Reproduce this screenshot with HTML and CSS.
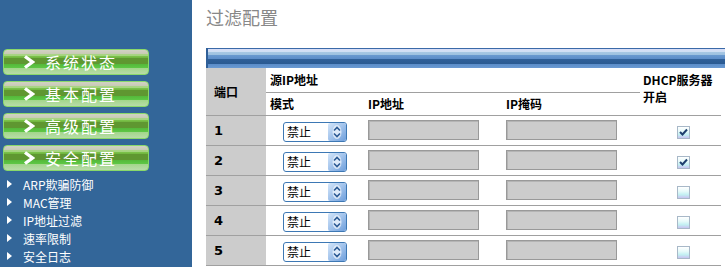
FILE: index.html
```html
<!DOCTYPE html>
<html lang="zh-CN">
<head>
<meta charset="utf-8">
<title>过滤配置</title>
<link rel="stylesheet" href="styles.css">
</head>
<body>
<aside class="side">
  <nav class="menu">
    <a class="btn"><svg class="chev" width="12" height="14" viewBox="0 0 12 14"><polyline points="2,1.5 9.5,7 2,12.5" fill="none" stroke="#fff" stroke-width="3.4" stroke-linejoin="miter"/></svg><span>系统状态</span></a>
    <a class="btn"><svg class="chev" width="12" height="14" viewBox="0 0 12 14"><polyline points="2,1.5 9.5,7 2,12.5" fill="none" stroke="#fff" stroke-width="3.4" stroke-linejoin="miter"/></svg><span>基本配置</span></a>
    <a class="btn"><svg class="chev" width="12" height="14" viewBox="0 0 12 14"><polyline points="2,1.5 9.5,7 2,12.5" fill="none" stroke="#fff" stroke-width="3.4" stroke-linejoin="miter"/></svg><span>高级配置</span></a>
    <a class="btn"><svg class="chev" width="12" height="14" viewBox="0 0 12 14"><polyline points="2,1.5 9.5,7 2,12.5" fill="none" stroke="#fff" stroke-width="3.4" stroke-linejoin="miter"/></svg><span>安全配置</span></a>
  </nav>
  <ul class="links">
    <li><span class="tri"></span>ARP欺骗防御</li>
    <li><span class="tri"></span>MAC管理</li>
    <li><span class="tri"></span>IP地址过滤</li>
    <li><span class="tri"></span>速率限制</li>
    <li><span class="tri"></span>安全日志</li>
  </ul>
</aside>
<main class="content">
  <h1 class="title">过滤配置</h1>
  <div class="bar"></div>
  <table class="grid">
    <colgroup>
      <col class="c-port"><col class="c-mode"><col class="c-ip"><col class="c-mask"><col class="c-dhcp">
    </colgroup>
    <thead>
      <tr class="h1">
        <th class="port" rowspan="2">端口</th>
        <th class="src" colspan="3">源IP地址</th>
        <th class="dhcp" rowspan="2">DHCP服务器<br>开启</th>
      </tr>
      <tr class="h2">
        <th>模式</th>
        <th>IP地址</th>
        <th>IP掩码</th>
      </tr>
    </thead>
    <tbody>
      <tr>
        <td class="port">1</td>
        <td class="mode"><span class="sel"><span class="sel-text">禁止</span><svg class="sel-btn" width="18" height="18" viewBox="0 0 18 18"><defs><linearGradient id="g1" x1="0" y1="0" x2="1" y2="1"><stop offset="0" stop-color="#d4e6fa"/><stop offset="1" stop-color="#6f9fdc"/></linearGradient></defs><rect x="0" y="0" width="18" height="18" rx="2" fill="url(#g1)"/><ellipse cx="9" cy="9" rx="4.5" ry="7" fill="#e6f0fc" opacity="0.85"/><polyline points="6,7.5 9,4.5 12,7.5" fill="none" stroke="#2c5a94" stroke-width="1.6"/><polyline points="6,10.5 9,13.5 12,10.5" fill="none" stroke="#2c5a94" stroke-width="1.6"/></svg></span></td>
        <td><span class="inp"></span></td>
        <td><span class="inp"></span></td>
        <td class="chk-cell"><span class="chk on"><svg width="9" height="8" viewBox="0 0 9 8"><polyline points="1,4 3.5,6.5 8,1.5" fill="none" stroke="#1f3f6e" stroke-width="2"/></svg></span></td>
      </tr>
      <tr>
        <td class="port">2</td>
        <td class="mode"><span class="sel"><span class="sel-text">禁止</span><svg class="sel-btn" width="18" height="18" viewBox="0 0 18 18"><rect x="0" y="0" width="18" height="18" rx="2" fill="url(#g1)"/><ellipse cx="9" cy="9" rx="4.5" ry="7" fill="#e6f0fc" opacity="0.85"/><polyline points="6,7.5 9,4.5 12,7.5" fill="none" stroke="#2c5a94" stroke-width="1.6"/><polyline points="6,10.5 9,13.5 12,10.5" fill="none" stroke="#2c5a94" stroke-width="1.6"/></svg></span></td>
        <td><span class="inp"></span></td>
        <td><span class="inp"></span></td>
        <td class="chk-cell"><span class="chk on"><svg width="9" height="8" viewBox="0 0 9 8"><polyline points="1,4 3.5,6.5 8,1.5" fill="none" stroke="#1f3f6e" stroke-width="2"/></svg></span></td>
      </tr>
      <tr>
        <td class="port">3</td>
        <td class="mode"><span class="sel"><span class="sel-text">禁止</span><svg class="sel-btn" width="18" height="18" viewBox="0 0 18 18"><rect x="0" y="0" width="18" height="18" rx="2" fill="url(#g1)"/><ellipse cx="9" cy="9" rx="4.5" ry="7" fill="#e6f0fc" opacity="0.85"/><polyline points="6,7.5 9,4.5 12,7.5" fill="none" stroke="#2c5a94" stroke-width="1.6"/><polyline points="6,10.5 9,13.5 12,10.5" fill="none" stroke="#2c5a94" stroke-width="1.6"/></svg></span></td>
        <td><span class="inp"></span></td>
        <td><span class="inp"></span></td>
        <td class="chk-cell"><span class="chk"></span></td>
      </tr>
      <tr>
        <td class="port">4</td>
        <td class="mode"><span class="sel"><span class="sel-text">禁止</span><svg class="sel-btn" width="18" height="18" viewBox="0 0 18 18"><rect x="0" y="0" width="18" height="18" rx="2" fill="url(#g1)"/><ellipse cx="9" cy="9" rx="4.5" ry="7" fill="#e6f0fc" opacity="0.85"/><polyline points="6,7.5 9,4.5 12,7.5" fill="none" stroke="#2c5a94" stroke-width="1.6"/><polyline points="6,10.5 9,13.5 12,10.5" fill="none" stroke="#2c5a94" stroke-width="1.6"/></svg></span></td>
        <td><span class="inp"></span></td>
        <td><span class="inp"></span></td>
        <td class="chk-cell"><span class="chk"></span></td>
      </tr>
      <tr>
        <td class="port">5</td>
        <td class="mode"><span class="sel"><span class="sel-text">禁止</span><svg class="sel-btn" width="18" height="18" viewBox="0 0 18 18"><rect x="0" y="0" width="18" height="18" rx="2" fill="url(#g1)"/><ellipse cx="9" cy="9" rx="4.5" ry="7" fill="#e6f0fc" opacity="0.85"/><polyline points="6,7.5 9,4.5 12,7.5" fill="none" stroke="#2c5a94" stroke-width="1.6"/><polyline points="6,10.5 9,13.5 12,10.5" fill="none" stroke="#2c5a94" stroke-width="1.6"/></svg></span></td>
        <td><span class="inp"></span></td>
        <td><span class="inp"></span></td>
        <td class="chk-cell"><span class="chk"></span></td>
      </tr>
    </tbody>
  </table>
</main>
</body>
</html>
```

FILE: styles.css
```css
html, body {
  margin: 0;
  padding: 0;
  height: 100%;
}
body {
  display: flex;
  font-family: "Noto Sans CJK SC", "DejaVu Sans", sans-serif;
  font-size: 12px;
  color: #000;
  background: #fff;
  overflow: hidden;
}
.side {
  width: 192px;
  flex: 0 0 192px;
  background: #336699;
  padding-top: 49px;
  box-sizing: border-box;
}
.menu {
  display: flex;
  flex-direction: column;
  gap: 6px;
  padding-left: 3px;
}
.btn {
  display: flex;
  align-items: center;
  width: 146px;
  height: 26px;
  box-sizing: border-box;
  border: 1px solid #8ad86a;
  border-radius: 4px;
  background: linear-gradient(to bottom,
    #d2d2c4 0px, #c8cab4 4px,
    #aad386 4px, #a4d47e 6px,
    #7dc64c 6px, #6fb23e 8px,
    #5f9731 8px, #5f9731 14px,
    #54b83a 14px, #5ec846 18px,
    #a2d68a 18px, #b8dca8 24px);
  color: #fff;
  font-size: 16px;
  letter-spacing: 2px;
  text-decoration: none;
}
.chev {
  margin-left: 19px;
  margin-right: 10px;
}
.btn span {
  line-height: 24px;
}
.links {
  list-style: none;
  margin: 4px 0 0 0;
  padding: 0;
}
.links li {
  display: flex;
  align-items: center;
  height: 18px;
  color: #fff;
  font-size: 12px;
}
.tri {
  width: 0;
  height: 0;
  border-left: 5px solid #fff;
  border-top: 4px solid transparent;
  border-bottom: 4px solid transparent;
  margin-left: 7px;
  margin-right: 11px;
}
.content {
  flex: 1;
  padding-left: 14px;
  overflow: hidden;
}
.title {
  margin: 0;
  padding-top: 5px;
  font-size: 18px;
  font-weight: normal;
  line-height: 24px;
  color: #888;
  height: 48px;
  box-sizing: border-box;
}
.bar {
  width: 520px;
  height: 20px;
  background: linear-gradient(to bottom,
    #3a6aa8 0px, #3a6aa8 1px,
    #d8dcf6 1px, #cfe0f4 4px,
    #a8c8e4 4px, #9cc0e0 7px,
    #6a9ad0 7px, #5b8cc8 11px,
    #2f5f98 11px, #2a5a92 16px,
    #5a8cc8 16px, #6a9ad2 20px);
  border-left: 2px solid #2f5f98;
  box-sizing: border-box;
}
.grid {
  border-collapse: collapse;
  table-layout: fixed;
  width: 515px;
}
.c-port { width: 60px; }
.c-mode { width: 98px; }
.c-ip { width: 138px; }
.c-mask { width: 138px; }
.c-dhcp { width: 81px; }
.grid th {
  text-align: left;
  font-weight: bold;
  padding: 0 0 0 4px;
  vertical-align: middle;
}
.grid .h1 { height: 24px; }
.grid .h2 { height: 23px; }
.grid .h2 th, .grid .h1 th.port, .grid .h1 th.dhcp {
  border-bottom: 1px solid #a0a0a0;
}
.grid th.src {
  border-bottom: 1px solid #a0a0a0;
}
.grid th.port {
  background: #cccccc;
  padding-left: 8px;
}
.grid th.dhcp {
  padding-left: 3px;
  line-height: 17px;
  padding-bottom: 6px;
}
.grid td {
  height: 29px;
  padding: 0 0 0 4px;
  border-bottom: 1px solid #a0a0a0;
  vertical-align: middle;
}
.grid td.port {
  background: #cccccc;
  padding-left: 8px;
  font-weight: bold;
  font-size: 13px;
  font-family: "DejaVu Sans", sans-serif;
}
.grid td.mode {
  padding-left: 17px;
}
.sel {
  display: inline-flex;
  align-items: center;
  width: 64px;
  height: 20px;
  box-sizing: border-box;
  border: 1px solid #3d78b4;
  border-radius: 3px;
  background: #fff;
  vertical-align: middle;
  margin-top: 3px;
}
.sel-text {
  flex: 1;
  padding-left: 3px;
  font-size: 12px;
  line-height: 18px;
}
.sel-btn {
  display: block;
}
.inp {
  display: inline-block;
  width: 111px;
  height: 20px;
  box-sizing: border-box;
  background: #cccccc;
  border: 1px solid #999;
  box-shadow: inset 1px 1px 0 #b4b4b4;
  vertical-align: middle;
}
.grid td.chk-cell {
  text-align: center;
  padding-left: 0;
}
.chk {
  display: inline-flex;
  align-items: center;
  justify-content: center;
  width: 13px;
  height: 13px;
  box-sizing: border-box;
  border: 1px solid #a8b8c8;
  background: linear-gradient(to bottom, #ffffff 0%, #e6fafa 40%, #c2f0f2 70%, #c8c2f0 100%);
  vertical-align: middle;
  margin-left: 6px;
}
```
